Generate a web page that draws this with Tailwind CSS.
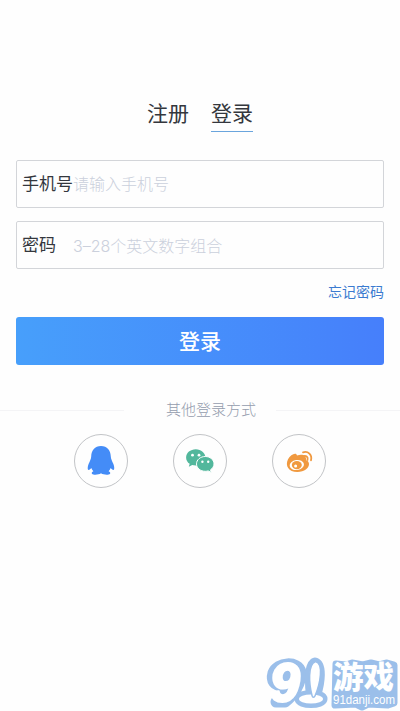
<!DOCTYPE html>
<html lang="zh-CN">
<head>
  <meta charset="UTF-8" />
  <meta name="viewport" content="width=device-width, initial-scale=1" />
  <title>登录</title>
  <script src="https://cdn.jsdelivr.net/npm/@tailwindcss/browser@4"></script>
</head>
<body class="relative h-screen overflow-hidden bg-[#fefefe] font-['Liberation_Sans','Noto_Sans_CJK_SC',sans-serif] text-[#34373d]">

  <main class="flex flex-col pt-[98px]">
    <!-- Tabs -->
    <nav class="flex justify-center gap-[22px] text-[21px] leading-[32px]">
      <a href="#" class="h-[34px]">注册</a>
      <a href="#" class="h-[34px] border-b border-[#6aa5dd]">登录</a>
    </nav>

    <form class="mx-4 mt-7 flex flex-col">
      <label class="flex h-12 items-center rounded-xs border border-[#d3d5d9] pl-[5px] pt-0.5">
        <span class="w-[51px] shrink-0 text-[17px]">手机号</span>
        <input type="text" placeholder="请输入手机号" class="min-w-0 flex-1 text-base font-light outline-none placeholder:text-[#cbd0dc]" />
      </label>
      <label class="mt-[13px] flex h-12 items-center rounded-xs border border-[#d3d5d9] pl-[5px] pt-0.5">
        <span class="w-[51px] shrink-0 text-[17px]">密码</span>
        <input type="text" placeholder="3–28个英文数字组合" class="min-w-0 flex-1 font-['Inter','Noto_Sans_CJK_SC',sans-serif] text-base font-light outline-none placeholder:text-[#cbd0dc]" />
      </label>
      <a href="#" class="mt-3 self-end text-sm leading-[22px] text-[#3b7bd0]">忘记密码</a>
      <button type="button" class="mt-[14px] h-12 rounded-[3px] bg-linear-to-r from-[#479ffb] to-[#467ffb] pt-0.5 text-[21px] font-medium text-white">登录</button>
    </form>

    <!-- Other sign-in methods -->
    <div class="mt-[34px] flex items-center justify-between">
      <span class="h-px w-[124px] bg-[#f4f4f6]"></span>
      <span class="pl-[22px] text-[15px] font-light leading-[22px] text-[#949cad]">其他登录方式</span>
      <span class="h-px w-[124px] bg-[#f4f4f6]"></span>
    </div>
    <div class="mt-[13px] flex justify-center gap-[45px]">
      <a href="#" class="size-[54px] rounded-full border border-[#c2c4c7]">
        <svg viewBox="0 0.5 54 54" class="-m-px size-[54px]" fill="#448cf7">
          <path d="M27 12.500c-6.200 0-9.600 4.500-9.800 10.500 0 2.400-1.400 4.700-2.500 7.300-1.100 2.800-1.300 5.800-.3 6.100 1 .2 2-.8 2.900-1.800.5 1.200 1.200 2.300 2.100 3.200-1.300.6-2 1.500-1.500 2.400 1.500 1.500 6.600 1.200 9.100-.5 2.500 1.700 7.600 2 9.100.5.5-.9-.2-1.800-1.500-2.400.9-.9 1.600-2 2.100-3.200.9 1 1.900 2 2.900 1.800 1-.3.8-3.300-.3-6.100-1.100-2.600-2.500-4.900-2.500-7.300-.2-6-3.600-10.500-9.800-10.500z" />
        </svg>
      </a>
      <a href="#" class="size-[54px] rounded-full border border-[#c2c4c7]">
        <svg viewBox="0 0.5 54 54" class="-m-px size-[54px]" fill="#52b79c">
          <path d="M22.800 15.700c-5.400 0-9.700 3.600-9.700 8.200 0 2.600 1.300 4.900 3.600 6.400l-.9 2.900 3.400-1.700c1.100.3 2.300.5 3.500.5 5.400 0 9.700-3.600 9.700-8.100s-4.300-8.200-9.600-8.200z" />
          <path d="M32.300 23c-4.900 0-8.800 3.300-8.800 7.400s3.900 7.400 8.800 7.400c1 0 2-.2 2.900-.4l3.100 1.600-.8-2.700c2.100-1.400 3.500-3.500 3.500-5.900 0-4.100-3.900-7.400-8.700-7.400z" stroke="#fff" stroke-width="1" />
          <g fill="#fff">
            <circle cx="19.500" cy="21.700" r="1.400" /><circle cx="26" cy="21.700" r="1.400" />
            <circle cx="29.400" cy="28.200" r="1.200" /><circle cx="35.200" cy="28.200" r="1.200" />
          </g>
        </svg>
      </a>
      <a href="#" class="size-[54px] rounded-full border border-[#c2c4c7]">
        <svg viewBox="0 0.5 54 54" class="-m-px size-[54px]" fill="none">
          <path fill="#f0993f" d="M25 22c-.6-3.400-6.400-1.200-9 3.800-3.200 6.600.7 12.700 9.300 12.700 7.300 0 11.700-4 11.700-8 0-2-1.300-3.300-2.800-3.800.4-4.600-3.600-6.700-9.200-4.700z" />
          <ellipse cx="24.800" cy="31.500" rx="7.200" ry="5" fill="#fff" transform="rotate(-8 24.800 31.500)" />
          <ellipse cx="24.800" cy="31.600" rx="5" ry="4.200" fill="#f0993f" />
          <circle cx="23.600" cy="32.500" r="1.500" fill="#fff" />
          <path d="M31 18.800c5-1.700 9.400 2.500 8 8M31.500 22.500c2.800-.8 4.800 1.200 4 4" stroke="#f0993f" stroke-width="1.800" stroke-linecap="round" />
        </svg>
      </a>
    </div>
  </main>

  <!-- Site badge -->
  <svg class="absolute bottom-0 right-0 h-[61px] w-[140px]" viewBox="0 0 140 61" stroke-linejoin="round">
    <g fill="#9bbfea" stroke="#9bbfea">
      <path d="M16 52L26 36C13 37 11 30 13 23C17 12 38 10 41 22C42 33 33 46 25 52z" stroke-width="11" />
      <path d="M55 14c-5 4-4 22-2 34 5-10 8-31 2-34z" stroke-width="13" />
      <ellipse cx="51" cy="49" rx="12" ry="4.500" stroke-width="9" />
      <path d="M76 14l10 1 6-2 11 2 8-2 8 2 8-2 7 2v38l-6 2-20-1-6 3-6-3-21 1z" stroke-width="7" />
    </g>
    <ellipse cx="51" cy="49" rx="12" ry="4.500" fill="#fff" />
    <path d="M55.500 11.500c-8 3-6.500 22-3.500 34 .6 2.400 2.200 2.400 3.200 0 5-12 8.800-32 .3-34z" fill="#fff" stroke="#9bbfea" stroke-width="1.500" />
    <g fill="#fff">
      <text x="10" y="51" font-family="Liberation Sans" font-size="53" font-weight="700" font-style="italic" stroke="#fff" stroke-width="3">9</text>
      <text x="73" y="37.500" font-family="Noto Sans CJK SC" font-size="30.500" font-weight="900">游戏</text>
      <text x="73" y="54" font-family="Liberation Sans" font-size="12" textLength="62" lengthAdjust="spacingAndGlyphs">91danji.com</text>
    </g>
  </svg>
</body>
</html>
